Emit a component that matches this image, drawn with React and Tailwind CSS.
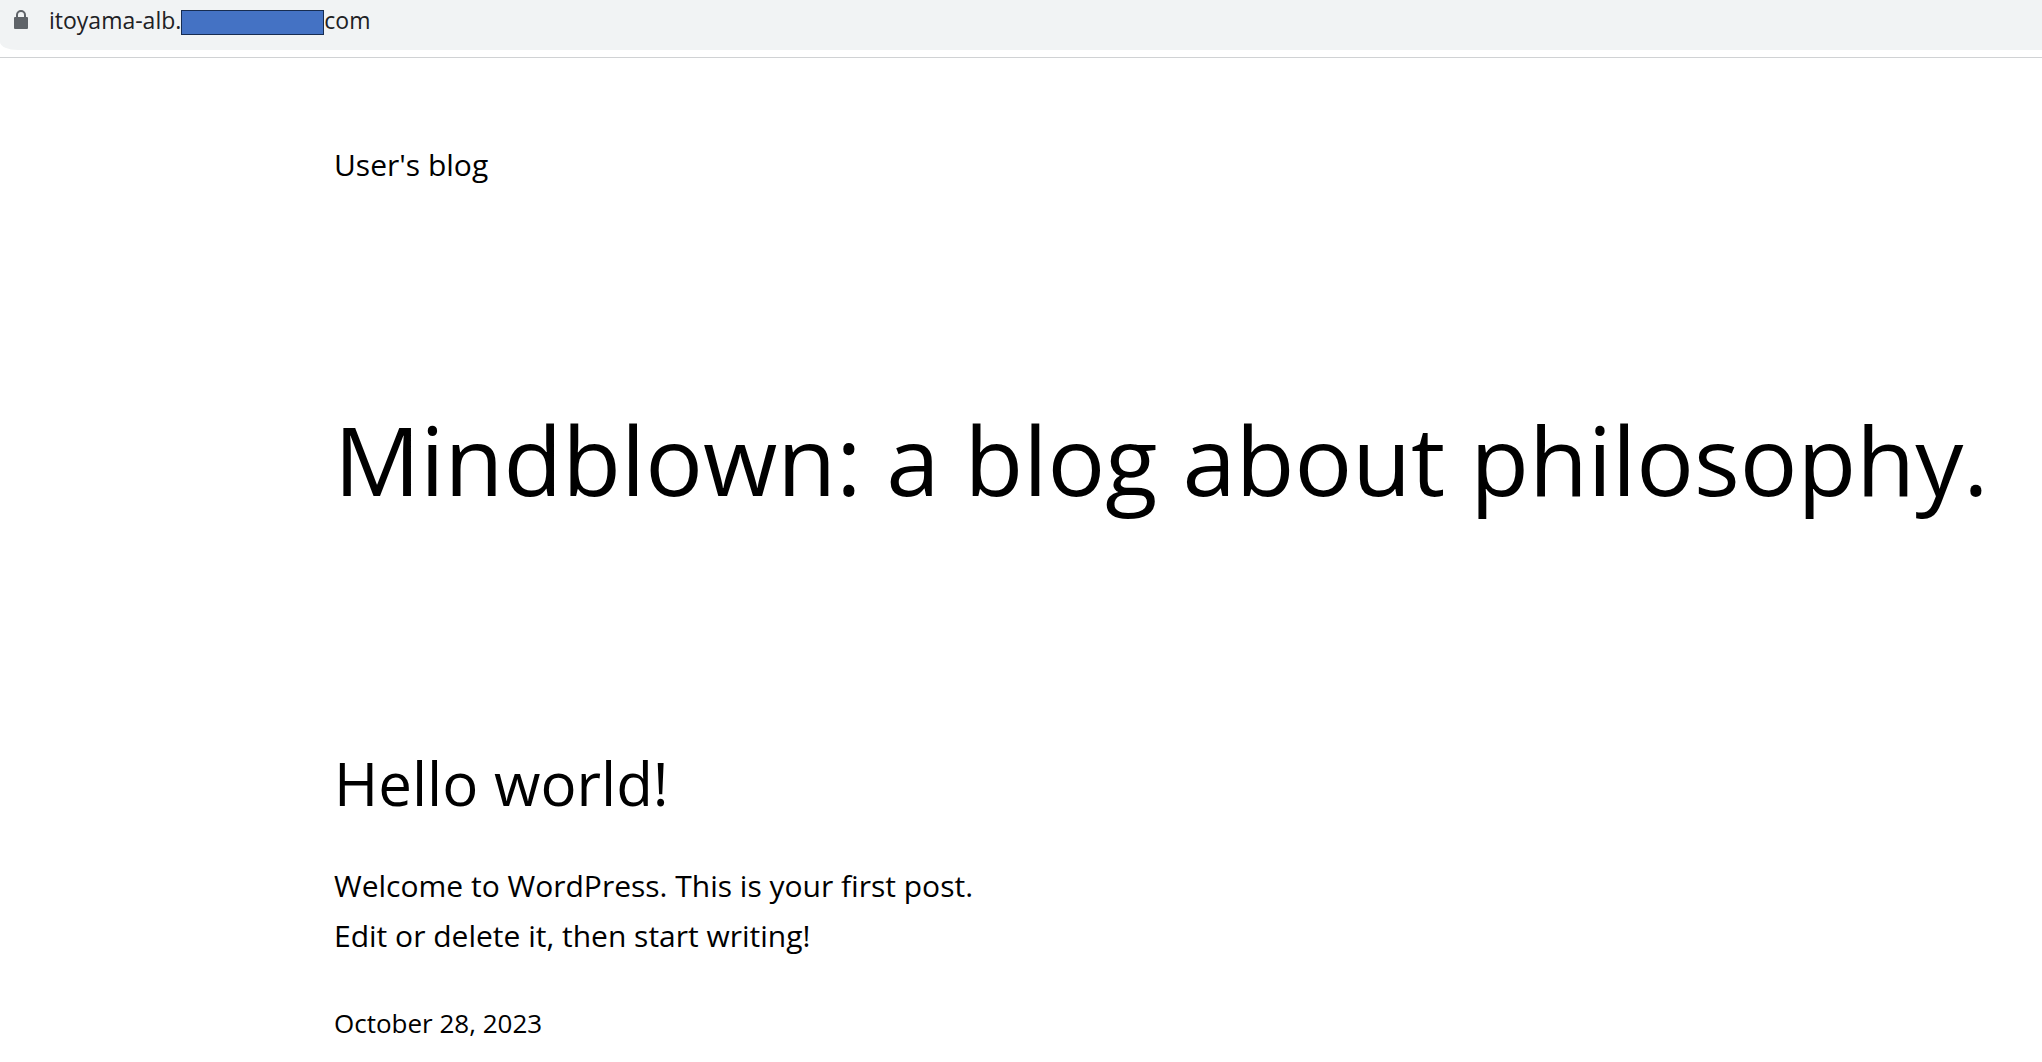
const LockIcon = () => (
    <svg viewBox="0 0 16 20" className="h-5 w-4 shrink-0" aria-hidden="true">
        <path
            fill="#5f6368"
            fillRule="evenodd"
            d="M2 7h1V5a5 5 0 0 1 10 0v2h1a1 1 0 0 1 1 1v10a1 1 0 0 1-1 1H2a1 1 0 0 1-1-1V8a1 1 0 0 1 1-1Zm3 0h6V5a3 3 0 0 0-6 0Z"
        />
    </svg>
);

const AddressBar = () => (
    <div className="border-b border-[#d0d2d4] bg-white pb-[7px]">
        <div className="flex h-[50px] items-start rounded-bl-[18px_8px] bg-[#f1f3f4] pl-[13px] pt-1">
            <div className="flex h-8 items-center text-[23px] text-[#202124]">
                <LockIcon />
                <span className="ml-5">itoyama-alb.</span>
                {/* Redacted domain */}
                <span className="mt-1 h-[25px] w-[143px] border border-[#172c51] bg-[#4472c4]" />
                <span>com</span>
            </div>
        </div>
    </div>
);

const Post = ({ title, lines, date }) => (
    <article>
        <h2 className="text-[60px] leading-[72px]">
            <a href="#hello-world">{title}</a>
        </h2>
        <p className="mt-[42px] text-[30px] leading-[50px]">
            {lines.map((line) => (
                <span key={line} className="block">{line}</span>
            ))}
        </p>
        <time dateTime="2023-10-28" className="mt-10 block text-[26px] leading-[44px]">
            {date}
        </time>
    </article>
);

export default function App() {
    return (
        <div className="min-h-screen bg-white font-['Open_Sans','Noto_Sans',sans-serif] text-black">
            <AddressBar />
            <div className="pl-[334px]">
                <header className="pt-[82px] text-[30px] leading-[50px]">
                    <a href="#home">User's blog</a>
                </header>
                <main>
                    <h1 className="mt-[204px] whitespace-nowrap text-[96px] leading-[130px]">
                        Mindblown: a blog about philosophy.
                    </h1>
                    <div className="mt-[223px]">
                        <Post
                            title="Hello world!"
                            lines={[
                                "Welcome to WordPress. This is your first post.",
                                "Edit or delete it, then start writing!",
                            ]}
                            date="October 28, 2023"
                        />
                    </div>
                </main>
            </div>
        </div>
    );
}
